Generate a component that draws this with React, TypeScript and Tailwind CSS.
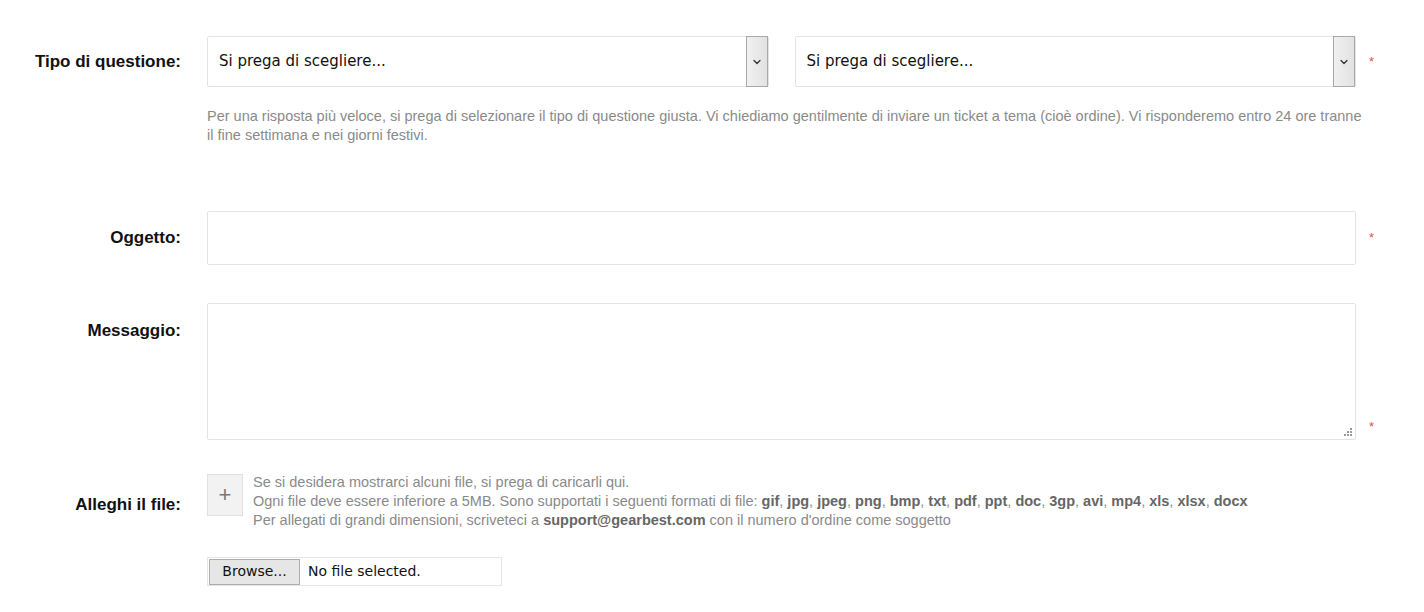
import { ChevronDown } from "lucide-react"

const formats = ["gif", "jpg", "jpeg", "png", "bmp", "txt", "pdf", "ppt", "doc", "3gp", "avi", "mp4", "xls", "xlsx", "docx"]

function Required() {
  return <span className="w-[16px] pl-[13px] text-[13px] text-[#d9534f]">*</span>
}

function FakeSelect() {
  return (
    <div className="flex h-[51px] flex-1 items-center justify-between rounded-[2px] border border-[#e3e3e3] bg-white">
      <span className="pl-[11px] text-[15px] text-[#111]" style={{ fontFamily: "Tahoma, 'DejaVu Sans', sans-serif" }}>
        Si prega di scegliere...
      </span>
      <div className="flex h-[51px] w-[22px] items-center justify-center border border-[#a9a9a9] bg-gradient-to-r from-[#f0f0f0] to-[#e2e2e2]">
        <ChevronDown className="h-[12px] w-[12px] text-[#333]" strokeWidth={2.5} />
      </div>
    </div>
  )
}

export default function App() {
  return (
    <div className="min-h-[612px] bg-white pt-[36px] text-[#111]" style={{ fontFamily: "'Liberation Sans', Arial, sans-serif" }}>
      {/* Tipo di questione */}
      <div className="flex items-center">
        <label className="w-[181px] text-right text-[17px] font-bold">Tipo di questione:</label>
        <div className="ml-[26px] flex w-[1149px] gap-[26px]">
          <FakeSelect />
          <FakeSelect />
        </div>
        <Required />
      </div>
      <div className="ml-[207px] mt-[20px] w-[1160px] text-[14.5px] leading-[19px] text-[#8a8a8a]">
        Per una risposta più veloce, si prega di selezionare il tipo di questione giusta. Vi chiediamo gentilmente di inviare un ticket a tema (cioè ordine). Vi risponderemo entro 24 ore tranne il fine settimana e nei giorni festivi.
      </div>

      {/* Oggetto */}
      <div className="mt-[66px] flex items-center">
        <label className="w-[181px] text-right text-[17px] font-bold">Oggetto:</label>
        <div className="ml-[26px] h-[54px] w-[1149px] rounded-[2px] border border-[#e3e3e3] bg-white" />
        <Required />
      </div>

      {/* Messaggio */}
      <div className="mt-[38px] flex items-start">
        <label className="w-[181px] pt-[15px] text-right text-[17px] font-bold">Messaggio:</label>
        <div className="relative ml-[26px] h-[137px] w-[1149px] rounded-[2px] border border-[#e3e3e3] bg-white">
          <svg className="absolute bottom-[2px] right-[2px]" width="10" height="10" viewBox="0 0 10 10">
            <rect x="7" y="1" width="2" height="2" fill="#999" />
            <rect x="4" y="4" width="2" height="2" fill="#999" />
            <rect x="7" y="4" width="2" height="2" fill="#999" />
            <rect x="1" y="7" width="2" height="2" fill="#999" />
            <rect x="4" y="7" width="2" height="2" fill="#999" />
            <rect x="7" y="7" width="2" height="2" fill="#999" />
          </svg>
        </div>
        <div className="self-end pb-[2px]">
          <Required />
        </div>
      </div>

      {/* Alleghi il file */}
      <div className="mt-[33px] flex items-start">
        <label className="w-[181px] pt-[19px] text-right text-[17px] font-bold">Alleghi il file:</label>
        <div className="ml-[26px] flex gap-[10px]">
          <div className="mt-[1px] flex h-[42px] w-[36px] items-center justify-center border border-[#e0e0e0] bg-[#f2f2f2] text-[22px] font-light leading-none text-[#777]">
            +
          </div>
          <div className="text-[14.5px] leading-[19px] text-[#8a8a8a]">
            <div>Se si desidera mostrarci alcuni file, si prega di caricarli qui.</div>
            <div>
              Ogni file deve essere inferiore a 5MB. Sono supportati i seguenti formati di file:{" "}
              {formats.map((f, i) => (
                <span key={f}>
                  <b className="text-[#666]">{f}</b>
                  {i < formats.length - 1 ? ", " : ""}
                </span>
              ))}
            </div>
            <div>
              Per allegati di grandi dimensioni, scriveteci a <b className="text-[#666]">support@gearbest.com</b> con il numero d'ordine come soggetto
            </div>
          </div>
        </div>
      </div>

      {/* File input */}
      <div className="ml-[207px] mt-[27px] flex h-[29px] w-[295px] items-center border border-[#e6e6e6] bg-white" style={{ fontFamily: "Tahoma, 'DejaVu Sans', sans-serif" }}>
        <div className="ml-[1px] flex h-[26px] w-[91px] items-center justify-center border border-[#adadad] bg-[#e6e6e6] text-[14px] text-[#111]">
          Browse...
        </div>
        <span className="pl-[8px] text-[14px] text-[#111]">No file selected.</span>
      </div>
    </div>
  )
}
